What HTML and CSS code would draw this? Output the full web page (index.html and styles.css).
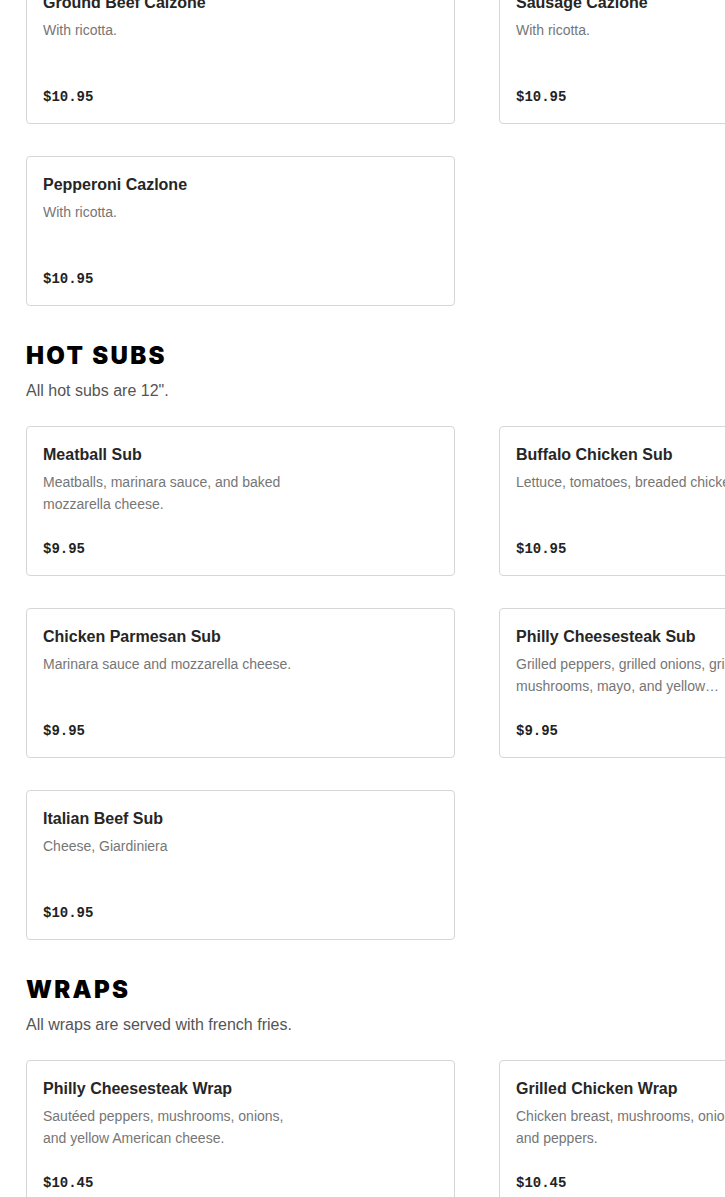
FILE: index.html
```html
<!DOCTYPE html>
<html lang="en">
<head>
<meta charset="utf-8">
<title>Menu</title>
<link rel="stylesheet" href="styles.css">
</head>
<body>
<main class="menu">
  <section class="section section-first">
    <div class="grid">
      <article class="card">
        <h3 class="item-name">Ground Beef Calzone</h3>
        <p class="item-desc">With ricotta.</p>
        <p class="item-price">$10.95</p>
      </article>
      <article class="card">
        <h3 class="item-name">Sausage Cazlone</h3>
        <p class="item-desc">With ricotta.</p>
        <p class="item-price">$10.95</p>
      </article>
      <article class="card">
        <h3 class="item-name">Pepperoni Cazlone</h3>
        <p class="item-desc">With ricotta.</p>
        <p class="item-price">$10.95</p>
      </article>
    </div>
  </section>

  <section class="section">
    <h2 class="section-title">HOT SUBS</h2>
    <p class="section-note">All hot subs are 12".</p>
    <div class="grid">
      <article class="card">
        <h3 class="item-name">Meatball Sub</h3>
        <p class="item-desc">Meatballs, marinara sauce, and baked mozzarella cheese.</p>
        <p class="item-price">$9.95</p>
      </article>
      <article class="card">
        <h3 class="item-name">Buffalo Chicken Sub</h3>
        <p class="item-desc">Lettuce, tomatoes, breaded chicken.</p>
        <p class="item-price">$10.95</p>
      </article>
      <article class="card">
        <h3 class="item-name">Chicken Parmesan Sub</h3>
        <p class="item-desc">Marinara sauce and mozzarella cheese.</p>
        <p class="item-price">$9.95</p>
      </article>
      <article class="card">
        <h3 class="item-name">Philly Cheesesteak Sub</h3>
        <p class="item-desc">Grilled peppers, grilled onions, grilled mushrooms, mayo, and yellow American cheese.</p>
        <p class="item-price">$9.95</p>
      </article>
      <article class="card">
        <h3 class="item-name">Italian Beef Sub</h3>
        <p class="item-desc">Cheese, Giardiniera</p>
        <p class="item-price">$10.95</p>
      </article>
    </div>
  </section>

  <section class="section">
    <h2 class="section-title">WRAPS</h2>
    <p class="section-note">All wraps are served with french fries.</p>
    <div class="grid">
      <article class="card">
        <h3 class="item-name">Philly Cheesesteak Wrap</h3>
        <p class="item-desc">Sautéed peppers, mushrooms, onions, and yellow American cheese.</p>
        <p class="item-price">$10.45</p>
      </article>
      <article class="card">
        <h3 class="item-name">Grilled Chicken Wrap</h3>
        <p class="item-desc">Chicken breast, mushrooms, onions, and peppers.</p>
        <p class="item-price">$10.45</p>
      </article>
    </div>
  </section>
</main>
</body>
</html>
```

FILE: styles.css
```css
html, body {
  margin: 0;
  padding: 0;
  background: #ffffff;
  overflow-x: hidden;
}

body {
  font-family: "Liberation Sans", Arial, sans-serif;
  color: #222222;
}

.menu {
  padding-left: 26px;
  margin-top: -26px;
}

.section {
  margin-top: 34px;
}

.section-first {
  margin-top: 0;
}

.section-title {
  margin: 0;
  font-family: "Inter", "Liberation Sans", sans-serif;
  font-weight: 900;
  font-size: 24px;
  line-height: 32px;
  letter-spacing: 2.3px;
  color: #000000;
}

.section-note {
  margin: 7px 0 23px;
  font-size: 16px;
  line-height: 24px;
  color: #555555;
}

.grid {
  display: grid;
  grid-template-columns: 429px 429px;
  column-gap: 44px;
  row-gap: 32px;
  width: max-content;
}

.card {
  box-sizing: border-box;
  height: 150px;
  border: 1px solid #d6d6d6;
  border-radius: 4px;
  padding: 16px;
  display: flex;
  flex-direction: column;
  background: #ffffff;
}

.item-name {
  margin: 0;
  font-size: 16px;
  line-height: 24px;
  font-weight: 700;
  color: #262626;
}

.item-desc {
  margin: 4px 0 0;
  max-width: 249px;
  font-size: 14px;
  line-height: 22px;
  color: #767676;
  display: -webkit-box;
  -webkit-box-orient: vertical;
  -webkit-line-clamp: 2;
  overflow: hidden;
}

.item-price {
  margin: auto 0 0;
  font-family: "Liberation Mono", "Courier New", monospace;
  font-weight: 700;
  font-size: 14px;
  line-height: 20px;
  color: #222222;
}
```
